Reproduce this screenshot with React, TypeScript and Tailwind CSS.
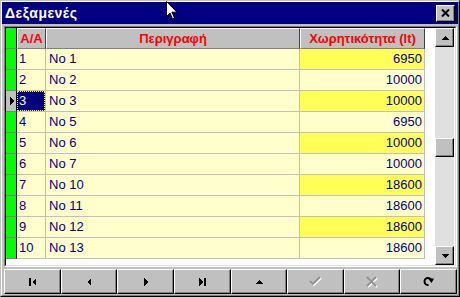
import React from "react";

const rows: [string, string, string][] = [
  ["1", "No 1", "6950"],
  ["2", "No 2", "10000"],
  ["3", "No 3", "10000"],
  ["4", "No 5", "6950"],
  ["5", "No 6", "10000"],
  ["6", "No 7", "10000"],
  ["7", "No 10", "18600"],
  ["8", "No 11", "18600"],
  ["9", "No 12", "18600"],
  ["10", "No 13", "18600"],
];

const sparse = "bg-[#ffffcc]";
const dense = "bg-[#ffff58]";

function Tri({ dir, className = "" }: { dir: "l" | "r" | "u" | "d"; className?: string }) {
  const pts =
    dir === "l"
      ? "4,0 4,8 0,4"
      : dir === "r"
      ? "0,0 0,8 4,4"
      : dir === "u"
      ? "4,0 8,4 0,4"
      : "0,0 8,0 4,4";
  const w = dir === "l" || dir === "r" ? 4 : 8;
  const h = dir === "l" || dir === "r" ? 8 : 4;
  return (
    <svg width={w} height={h} viewBox={`0 0 ${w} ${h}`} className={className} shapeRendering="crispEdges">
      <polygon points={pts} fill="#000" />
    </svg>
  );
}

function NavBtn({ children }: { children: React.ReactNode }) {
  return (
    <div className="flex-1 h-full flex items-center justify-center bg-[#c0c0c0] border-t border-l border-white border-b border-r border-b-black border-r-black shadow-[inset_-1px_-1px_#808080]">
      {children}
    </div>
  );
}

const hdr =
  "flex items-center justify-center bg-[#c0c0c0] border-t border-l border-white border-b border-r border-b-[#808080] border-r-[#404040] text-[#ff0000] font-bold text-[13px]";

export default function App() {
  return (
    <div
      className="w-[460px] h-[297px] relative bg-[#c0c0c0] border-t border-l border-[#c0c0c0] border-b border-r border-b-black border-r-black"
      style={{ fontFamily: '"Liberation Sans", Arial, sans-serif' }}
    >
      <div className="w-full h-full flex flex-col border-t border-l border-white border-b border-r border-b-[#808080] border-r-[#808080]">
        {/* Title bar */}
        <div className="h-[22px] bg-[#000080] flex items-center pl-[3px] pr-[3px] shrink-0">
          <span className="text-white font-bold text-[14px] leading-none tracking-[0.5px]">
            Δεξαμενές
          </span>
          <div className="ml-auto w-[19px] h-[17px] flex items-center justify-center bg-[#c0c0c0] border-t border-l border-white border-b border-r border-b-black border-r-black shadow-[inset_-1px_-1px_#808080]">
            <svg width="9" height="8" viewBox="0 0 9 8">
              <path d="M1 0.5 L8 7.5 M8 0.5 L1 7.5" stroke="#000" strokeWidth="2" />
            </svg>
          </div>
        </div>

        {/* Grid */}
        <div className="mt-[2px] ml-[2px] mr-[1px] h-[241px] shrink-0 border-t border-l border-[#808080] border-b border-r border-b-white border-r-white">
          <div className="w-full h-full flex bg-white border-t border-l border-black border-b border-r border-b-[#dfdfdf] border-r-[#dfdfdf]">
            <div className="flex-1 flex flex-col">
              {/* header */}
              <div className="flex h-[21px] shrink-0">
                <div className="w-[11px] bg-[#00ff00] border-b border-[#808080] border-r border-r-black" />
                <div className={`w-[29px] ${hdr}`}>A/A</div>
                <div className={`w-[254px] ${hdr}`}>Περιγραφή</div>
                <div className={`w-[125px] ${hdr}`}>Χωρητικότητα (lt)</div>
              </div>
              {rows.map(([n, d, c], i) => {
                const sel = i === 2;
                const odd = i % 2 === 0;
                return (
                  <div key={n} className="flex h-[21px] shrink-0 text-[13px] text-[#000080]">
                    <div
                      className={`w-[11px] flex items-center justify-center border-b border-[#808080] border-r border-r-black ${
                        sel ? "bg-[#c0c0c0]" : "bg-[#00ff00]"
                      }`}
                    >
                      {sel && <Tri dir="r" className="ml-[1px]" />}
                    </div>
                    <div className={`w-[29px] border-r border-b border-[#c0c0c0] ${sparse}`}>
                      {sel ? (
                        <div className="w-full h-full flex items-center pl-[1px] bg-[#000080] text-white border border-dotted border-[#ffff00]">
                          {n}
                        </div>
                      ) : (
                        <div className="w-full h-full flex items-center pl-[2px]">{n}</div>
                      )}
                    </div>
                    <div
                      className={`w-[254px] flex items-center pl-[3px] border-r border-b border-[#c0c0c0] ${sparse}`}
                    >
                      {d}
                    </div>
                    <div
                      className={`w-[125px] flex items-center justify-end pr-[2px] border-r border-b border-[#c0c0c0] ${
                        odd ? dense : sparse
                      }`}
                    >
                      {c}
                    </div>
                  </div>
                );
              })}
            </div>
            {/* scrollbar */}
            <div className="w-[19px] mr-[1px] flex flex-col shrink-0">
              <div className="h-[19px] shrink-0 flex items-center justify-center bg-[#c0c0c0] border-t border-l border-white border-b border-r border-b-black border-r-black shadow-[inset_-1px_-1px_#808080]">
                <Tri dir="u" />
              </div>
              <div className="flex-1 flex flex-col bg-[#e0e0e0]">
                <div className="h-[91px] shrink-0" />
                <div className="h-[19px] shrink-0 bg-[#c0c0c0] border-t border-l border-white border-b border-r border-b-black border-r-black shadow-[inset_-1px_-1px_#808080]" />
              </div>
              <div className="h-[19px] shrink-0 flex items-center justify-center bg-[#c0c0c0] border-t border-l border-white border-b border-r border-b-black border-r-black shadow-[inset_-1px_-1px_#808080]">
                <Tri dir="d" />
              </div>
            </div>
          </div>
        </div>

        {/* Nav buttons */}
        <div className="mt-[2px] ml-[2px] mr-[1px] h-[25px] flex shrink-0">
          <NavBtn>
            <div className="flex items-center">
              <div className="w-[2px] h-[8px] bg-black" />
              <Tri dir="l" className="ml-[1px]" />
            </div>
          </NavBtn>
          <NavBtn>
            <Tri dir="l" />
          </NavBtn>
          <NavBtn>
            <Tri dir="r" />
          </NavBtn>
          <NavBtn>
            <div className="flex items-center">
              <Tri dir="r" />
              <div className="w-[2px] h-[8px] bg-black ml-[1px]" />
            </div>
          </NavBtn>
          <NavBtn>
            <Tri dir="u" />
          </NavBtn>
          <NavBtn>
            <svg width="13" height="11" viewBox="0 0 13 11">
              <path d="M2 6 L5 9 L12 2" stroke="#ffffff" strokeWidth="1.8" fill="none" />
              <path d="M1 5 L4 8 L11 1" stroke="#909090" strokeWidth="1.8" fill="none" />
            </svg>
          </NavBtn>
          <NavBtn>
            <svg width="12" height="12" viewBox="0 0 12 12">
              <path d="M2 2 L11 11 M11 2 L2 11" stroke="#ffffff" strokeWidth="1.8" fill="none" />
              <path d="M1 1 L10 10 M10 1 L1 10" stroke="#909090" strokeWidth="1.8" fill="none" />
            </svg>
          </NavBtn>
          <NavBtn>
            <svg width="11" height="11" viewBox="0 0 11 11">
              <path d="M8.5 5 A3.5 3.5 0 1 0 5.5 9" stroke="#000" strokeWidth="2" fill="none" />
              <polygon points="5,2.5 11,2.5 8.5,7" fill="#000" />
            </svg>
          </NavBtn>
        </div>
      </div>

      {/* mouse cursor */}
      <svg width="12" height="19" viewBox="0 0 12 19" className="absolute left-[165px] top-0">
        <path
          d="M0.5 0.5 L0.5 15.5 L4 12 L6.5 18 L8.5 17 L6 11.2 L11 11.2 Z"
          fill="#ffffff"
          stroke="#000"
          strokeWidth="1"
        />
      </svg>
    </div>
  );
}
